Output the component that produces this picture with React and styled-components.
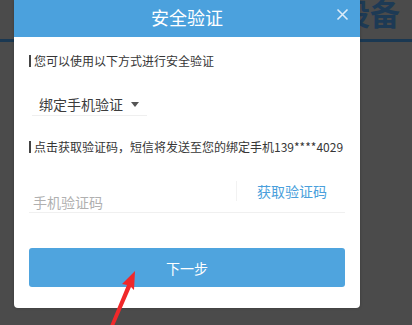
import React from 'react'
import styled, { createGlobalStyle } from 'styled-components';

const GlobalStyle = createGlobalStyle`
    html, body {
        margin: 0;
        padding: 0;
        background: #4b4b4b;
        font-family: "Noto Sans CJK SC", "Noto Sans", "Liberation Sans", sans-serif;
    }
`;

const Page = styled.div`
    position: relative;
    width: 412px;
    height: 325px;
    overflow: hidden;
    background: #4b4b4b;
`;

const PageTitle = styled.h1`
    margin: -3px 0 0 0;
    padding-left: 340px;
    font-size: 30px;
    line-height: 30px;
    font-weight: 700;
    color: #1d3a55;
    white-space: nowrap;
`;

const PageRule = styled.div`
    margin-top: 12px;
    height: 3px;
    background: #1a3852;
`;

const Modal = styled.div`
    position: absolute;
    left: 14px;
    top: 0;
    width: 346px;
    background: #fff;
    border-radius: 0 0 4px 4px;
    box-shadow: 0 0 3px rgba(0, 0, 0, 0.25);
`;

const ModalHeader = styled.div`
    position: relative;
    height: 37px;
    background: #4ba1dd;
    display: flex;
    align-items: center;
    justify-content: center;
`;

const ModalTitle = styled.span`
    color: #fff;
    font-size: 18px;
    line-height: 20px;
    margin-top: -4px;
`;

const CloseButton = styled.button`
    position: absolute;
    right: 11px;
    top: 8px;
    width: 13px;
    height: 13px;
    padding: 0;
    border: none;
    background: transparent;
    display: flex;
    cursor: pointer;
`;

const ModalBody = styled.div`
    padding: 0 15px 21px 15px;
    display: flex;
    flex-direction: column;
`;

const Label = styled.div`
    margin-top: ${props => props.top}px;
    height: 12px;
    display: flex;
    align-items: center;
    font-size: 12px;
    line-height: 12px;
    color: #363636;
    white-space: nowrap;

    &::before {
        content: '';
        width: 2px;
        height: 12px;
        background: #444;
        margin-right: 3px;
    }
`;

const Select = styled.div`
    margin: 25px 0 0 3px;
    width: 115px;
    height: 24px;
    padding-left: 7px;
    box-sizing: border-box;
    border-bottom: 1px solid #efefef;
    display: flex;
    align-items: center;
    gap: 8px;
    font-size: 14px;
    color: #3c3c3c;
`;

const Caret = styled.span`
    width: 0;
    height: 0;
    border-left: 4px solid transparent;
    border-right: 4px solid transparent;
    border-top: 5px solid #555;
    margin-top: 1px;
`;

const CodeRow = styled.div`
    margin-top: 26px;
    height: 33px;
    border-bottom: 1px solid #f0f0f0;
    display: flex;
`;

const CodeInput = styled.input`
    flex: 1;
    min-width: 0;
    align-self: flex-end;
    border: none;
    outline: none;
    padding: 0 0 0 4px;
    height: 20px;
    font-family: inherit;
    font-size: 14px;
    color: #444;
    background: transparent;

    &::placeholder {
        color: #b0b0b0;
    }
`;

const GetCode = styled.button`
    align-self: flex-start;
    margin-top: 2px;
    height: 20px;
    width: 109px;
    padding: 0 18px 0 20px;
    box-sizing: border-box;
    border: none;
    border-left: 1px solid #f2f2f2;
    background: transparent;
    font-family: inherit;
    font-size: 14px;
    line-height: 20px;
    color: #4a9fdc;
    white-space: nowrap;
    text-align: left;
    cursor: pointer;
`;

const NextButton = styled.button`
    margin-top: 35px;
    height: 39px;
    border: none;
    border-radius: 3px;
    background: #4fa4de;
    color: #fff;
    font-family: inherit;
    font-size: 14px;
    cursor: pointer;
`;

const Arrow = styled.svg`
    position: absolute;
    left: 0;
    top: 0;
    pointer-events: none;
`;

export default function App() {
    return (
        <>
            <GlobalStyle />
            <Page>
                <PageTitle>设备</PageTitle>
                <PageRule />
                <Modal>
                    <ModalHeader>
                        <ModalTitle>安全验证</ModalTitle>
                        <CloseButton aria-label="关闭">
                            <svg width="13" height="13" viewBox="0 0 13 13">
                                <path d="M1.5 1.5 L11.5 11.5 M11.5 1.5 L1.5 11.5" stroke="#dcebf8" strokeWidth="1.6" />
                            </svg>
                        </CloseButton>
                    </ModalHeader>
                    <ModalBody>
                        <Label top={18}>您可以使用以下方式进行安全验证</Label>
                        <Select>
                            绑定手机验证
                            <Caret />
                        </Select>
                        <Label top={25}>点击获取验证码，短信将发送至您的绑定手机139****4029</Label>
                        <CodeRow>
                            <CodeInput placeholder="手机验证码" />
                            <GetCode>获取验证码</GetCode>
                        </CodeRow>
                        <NextButton>下一步</NextButton>
                    </ModalBody>
                </Modal>
                <Arrow width="412" height="325" viewBox="0 0 412 325">
                    <polygon points="135,271 122,284 127,285 110,326 114,326 131,287 134,290" fill="#f0282a" />
                </Arrow>
            </Page>
        </>
    );
}
